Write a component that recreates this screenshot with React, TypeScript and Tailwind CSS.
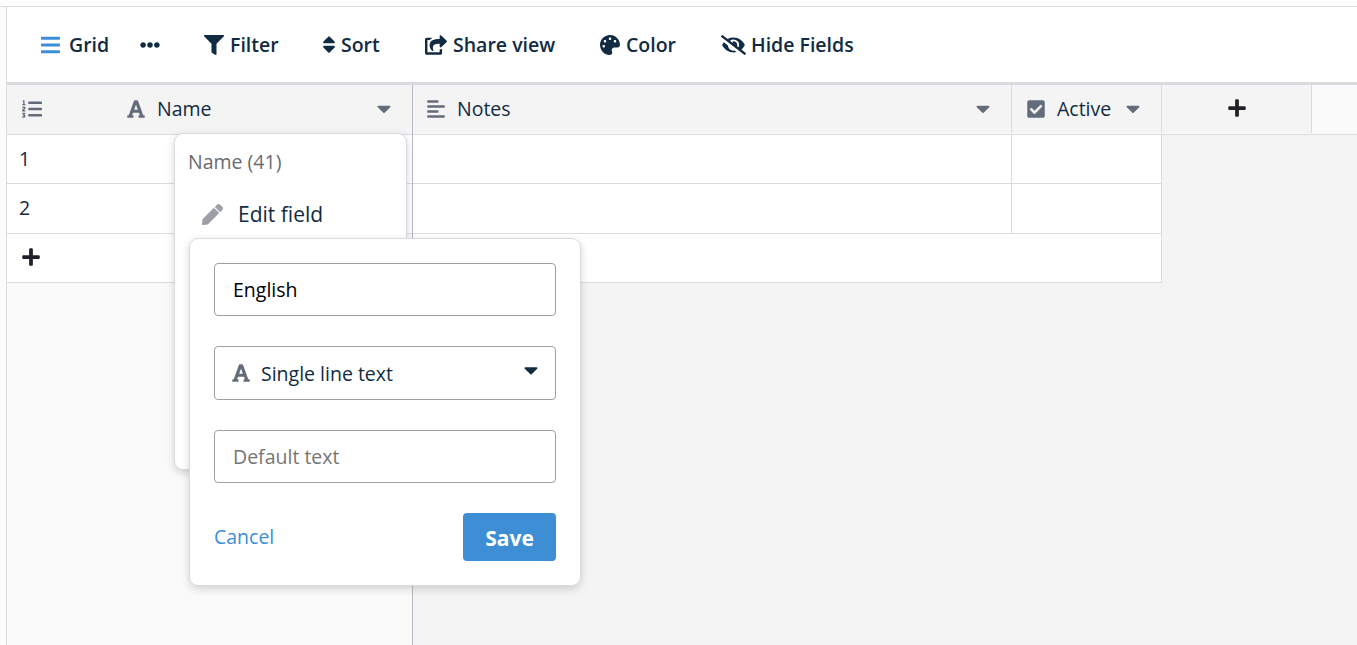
import type { ReactNode } from "react";
import type { IconType } from "react-icons";
import {
  FaAlignLeft,
  FaBars,
  FaCaretDown,
  FaCheckSquare,
  FaEllipsisH,
  FaEyeSlash,
  FaFilter,
  FaFont,
  FaListOl,
  FaPalette,
  FaPen,
  FaPlus,
  FaShareSquare,
  FaSort,
} from "react-icons/fa";

function ToolbarItem({ icon: Icon, label, iconClass, className }: { icon: IconType; label: string; iconClass: string; className: string }) {
  return (
    <button className={`flex shrink-0 items-center text-left whitespace-nowrap ${className}`}>
      <Icon className={`shrink-0 ${iconClass}`} />
      <span>{label}</span>
    </button>
  );
}

function Toolbar() {
  return (
    <header className="flex h-[78px] items-center border-b-3 border-[#d9dbde] bg-white pl-[34px] font-semibold">
      <ToolbarItem icon={FaBars} label="Grid" className="w-[99px]" iconClass="mr-[9px] h-[22px] w-[19px] text-[#3d8ed7]" />
      <button className="w-[64px]">
        <FaEllipsisH className="size-5" />
      </button>
      <ToolbarItem icon={FaFilter} label="Filter" className="w-[118px]" iconClass="mr-[6px] h-5 w-5" />
      <ToolbarItem icon={FaSort} label="Sort" className="w-[103px]" iconClass="mr-[5px] h-[21px] w-[14px]" />
      <ToolbarItem icon={FaShareSquare} label="Share view" className="w-[175px]" iconClass="mr-[6px] h-5 w-[22px]" />
      <ToolbarItem icon={FaPalette} label="Color" className="w-[121px]" iconClass="mr-[6px] h-5 w-5" />
      <ToolbarItem icon={FaEyeSlash} label="Hide Fields" className="" iconClass="mr-[5px] h-5 w-[25px]" />
    </header>
  );
}

function FieldHead({ icon: Icon, label, className }: { icon: IconType; label: string; className: string }) {
  return (
    <div className={`flex items-center ${className}`}>
      <Icon className="mr-3 h-5 w-[18px] shrink-0 text-[#646c79]" />
      <span>{label}</span>
      <FaCaretDown className="mb-[2px] ml-auto h-[23px] w-[14px] text-[#646c79]" />
    </div>
  );
}

function LeftRow({ children, className }: { children: ReactNode; className: string }) {
  return <div className={`flex items-center border-b border-[#d9dbde] bg-white ${className}`}>{children}</div>;
}

function LeftSection() {
  return (
    <section className="flex w-[406px] shrink-0 flex-col border-r border-[#b5bac2] bg-[#fafafa]">
      <div className="flex h-[50px] shrink-0 items-center border-b border-[#d9dbde] bg-[#f4f4f4] pb-px pl-[15px] pr-[21px]">
        <FaListOl className="mr-[85px] h-5 w-5 shrink-0 text-[#646c79]" />
        <FieldHead icon={FaFont} label="Name" className="flex-1" />
      </div>
      <LeftRow className="h-[49px] pl-3">1</LeftRow>
      <LeftRow className="h-[50px] pb-[2px] pl-3">2</LeftRow>
      <LeftRow className="h-[49px] pb-[2px] pl-[15px]">
        <FaPlus className="h-5 w-[18px] text-[#202128]" />
      </LeftRow>
    </section>
  );
}

function RightSection() {
  return (
    <section className="flex min-w-0 flex-1 flex-col bg-[#f4f4f4]">
      <div className="flex h-[50px] shrink-0 border-b border-[#d9dbde] bg-[#fafafa] pb-px">
        <FieldHead icon={FaAlignLeft} label="Notes" className="w-[599px] border-r border-[#d9dbde] bg-[#f4f4f4] pl-[14px] pr-[21px]" />
        <FieldHead icon={FaCheckSquare} label="Active" className="w-[150px] border-r border-[#d9dbde] bg-[#f4f4f4] pl-[15px] pr-[21px]" />
        <div className="flex w-[150px] items-center justify-center border-r border-[#d9dbde] bg-[#f4f4f4] pb-[2px]">
          <FaPlus className="h-5 w-[18px] text-[#202128]" />
        </div>
      </div>
      <div className="w-[749px] border-r border-[#d9dbde] bg-white">
        <div className="flex h-[49px] border-b border-[#d9dbde]">
          <div className="w-[599px] border-r border-[#d9dbde]" />
        </div>
        <div className="flex h-[50px] border-b border-[#d9dbde]">
          <div className="w-[599px] border-r border-[#d9dbde]" />
        </div>
        <div className="h-[49px] border-b border-[#d9dbde]" />
      </div>
    </section>
  );
}

function FieldMenu() {
  return (
    <div className="absolute left-[174px] top-[133px] h-[337px] w-[233px] rounded-[9px] border border-[#d9dbde] bg-white px-[13px] pt-[13px] shadow-[0_3px_9px_rgba(0,0,0,0.16)]">
      <div className="h-[30px] leading-[30px] text-[#6a6b70]">Name (41)</div>
      <div className="mt-[22px] flex h-[30px] items-center pl-[14px]">
        <FaPen className="mr-[15px] size-[21px] text-[#9c9fa6]" />
        <span className="text-[21px]">Edit field</span>
      </div>
    </div>
  );
}

function FieldForm() {
  return (
    <form className="absolute left-[189px] top-[238px] flex h-[348px] w-[392px] flex-col rounded-[9px] border border-[#d9dbde] bg-white px-6 pt-6 shadow-[0_3px_9px_rgba(0,0,0,0.16)]">
      <input
        defaultValue="English"
        className="h-[53px] w-full rounded-[4px] border border-[#9c9fa6] px-[18px] text-black outline-none"
      />
      <div className="mt-[30px] flex h-[54px] items-center rounded-[4px] border border-[#9c9fa6] pl-[17px] pr-[17px]">
        <FaFont className="mr-[11px] h-5 w-[18px] text-[#646c79]" />
        <span className="mt-[2px]">Single line text</span>
        <FaCaretDown className="mb-[6px] ml-auto h-6 w-[14px]" />
      </div>
      <input
        placeholder="Default text"
        className="mt-[30px] h-[53px] w-full rounded-[4px] border border-[#9c9fa6] px-[18px] outline-none placeholder:text-[#757575]"
      />
      <div className="mt-[30px] flex h-12 items-center justify-between">
        <a className="text-[#3d8ed7]">Cancel</a>
        <button type="button" className="h-12 w-[93px] rounded-[4px] bg-[#3d8ed4] pt-[2px] text-[21px] font-bold text-white">
          Save
        </button>
      </div>
    </form>
  );
}

export default function App() {
  return (
    <div className="relative flex h-[645px] w-[1357px] flex-col overflow-hidden bg-white pt-[6px] font-['Open_Sans',sans-serif] text-[19.5px] leading-[30px] text-[#112b43]">
      <div className="flex min-h-0 flex-1 border-t border-[#d9dbde] bg-[#fcfcfc] pl-[6px]">
        <main className="flex min-w-0 flex-1 flex-col border-l border-[#d9dbde]">
          <Toolbar />
          <div className="flex min-h-0 flex-1">
            <LeftSection />
            <RightSection />
          </div>
        </main>
      </div>
      <FieldMenu />
      <FieldForm />
    </div>
  );
}
